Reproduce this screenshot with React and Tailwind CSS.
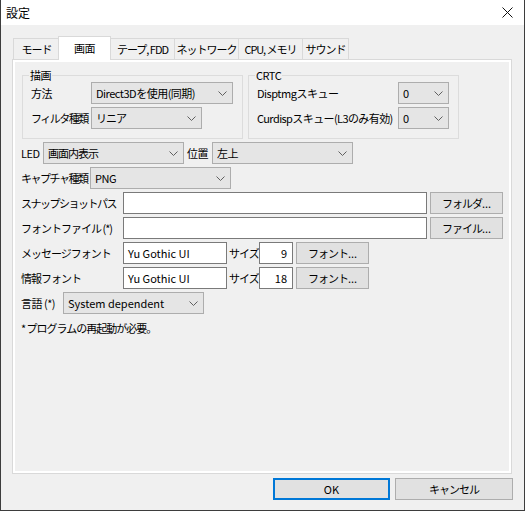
import React from "react";

const K = "tracking-[-1px]";
const KK = "tracking-[-1.5px]";

function Chevron() {
  return (
    <svg width="9" height="5" viewBox="0 0 9 5" className="shrink-0">
      <path d="M0.5 0.5 L4.5 4.5 L8.5 0.5" fill="none" stroke="#606060" strokeWidth="1" />
    </svg>
  );
}

function Select({ w, value, cls = "" }) {
  return (
    <div className={`${w} h-[22px] shrink-0 flex items-center justify-between border border-[#adadad] bg-[#e5e5e5] pl-[4px] pr-[5px]`}>
      <span className={`whitespace-nowrap ${cls}`}>{value}</span>
      <Chevron />
    </div>
  );
}

function Input({ w, value = "", right = false }) {
  return (
    <div className={`${w} h-[22px] shrink-0 flex items-center border border-[#7a7a7a] bg-white ${right ? "justify-end pr-[5px]" : "pl-[4px]"}`}>
      <span className="whitespace-nowrap tracking-normal">{value}</span>
    </div>
  );
}

function Btn({ w, children, dots = false, cls = "" }) {
  return (
    <div className={`${w} h-[22px] shrink-0 flex items-center justify-center border border-[#adadad] bg-[#e1e1e1] ${cls}`}>
      <span className="tracking-[-1px]">{children}</span>
      {dots && <span className="tracking-normal">...</span>}
    </div>
  );
}

function Tab({ w, children, cls = "" }) {
  return (
    <div className={`${w} h-[21px] shrink-0 flex items-center justify-center border-l border-t border-r border-[#d9d9d9] bg-[#f0f0f0] whitespace-nowrap tracking-[-1px] ${cls}`}>
      {children}
    </div>
  );
}

function Label({ w, children, cls = "" }) {
  return <span className={`${w} shrink-0 whitespace-nowrap ${cls}`}>{children}</span>;
}

const rootCls = "w-[525px] h-[511px] bg-[#f0f0f0] border-x border-b border-[#3d3d3d] flex flex-col text-[11px] leading-[14px] tracking-[-0.5px] text-black font-['Noto_Sans_CJK_JP','Noto_Sans',sans-serif]";

export default function App() {
  return (
    <div className={rootCls}>
      {/* Title bar */}
      <div className="h-[25px] shrink-0 bg-white flex items-center justify-between pl-[5px] pr-[11px]">
        <span className="text-[12px] tracking-normal">設定</span>
        <svg width="11" height="11" viewBox="0 0 11 11">
          <path d="M0.5 0.5 L10.5 10.5 M10.5 0.5 L0.5 10.5" stroke="#111" strokeWidth="1" fill="none" />
        </svg>
      </div>

      <div className="flex flex-col pl-[11px] pr-[12px] pt-[11px]">
        {/* Tabs */}
        <div className="flex items-end h-[23px] pl-[1px]">
          <Tab w="w-[47px]">モード</Tab>
          <div className="relative z-10 w-[53px] h-[24px] -mb-[1px] -ml-[2px] shrink-0 flex items-start pt-[4px] justify-center border-l border-t border-r border-[#d9d9d9] bg-white">
            画面
          </div>
          <Tab w="w-[65px]" cls="-ml-[1px]">テープ, FDD</Tab>
          <Tab w="w-[65px]" cls="-ml-[1px]">ネットワーク</Tab>
          <Tab w="w-[65px]" cls="-ml-[1px]">CPU, メモリ</Tab>
          <Tab w="w-[47px]" cls="-ml-[1px]">サウンド</Tab>
        </div>

        {/* Panel */}
        <div className="h-[415px] border border-[#d9d9d9] bg-white p-[2px]">
          <div className="h-full bg-[#f0f0f0] pt-[6px] pl-[6px] flex flex-col">
            <div className="flex gap-[5px] ml-[1px]">
              <fieldset className="w-[221px] border border-[#dcdcdc] pl-[8px] pb-[9px]">
                <legend className="px-[1px] -ml-[2px] leading-[14px]">描画</legend>
                <div className="flex flex-col gap-[3px]">
                  <div className="flex items-center">
                    <Label w="w-[60px]">方法</Label>
                    <Select w="w-[142px]" value="Direct3Dを使用(同期)" />
                  </div>
                  <div className="flex items-center">
                    <Label w="w-[60px]" cls={KK}>フィルタ種類</Label>
                    <Select w="w-[111px]" value="リニア" cls={K} />
                  </div>
                </div>
              </fieldset>
              <fieldset className="w-[211px] border border-[#dcdcdc] pl-[8px] pb-[9px]">
                <legend className="px-[1px] -ml-[2px] leading-[14px]">CRTC</legend>
                <div className="flex flex-col gap-[3px]">
                  <div className="flex items-center">
                    <Label w="w-[141px]">Disptmgスキュー</Label>
                    <Select w="w-[51px]" value="0" />
                  </div>
                  <div className="flex items-center">
                    <Label w="w-[141px]" cls="tracking-[-0.6px]">Curdispスキュー(L3のみ有効)</Label>
                    <Select w="w-[51px]" value="0" />
                  </div>
                </div>
              </fieldset>
            </div>

            <div className="flex flex-col gap-[3px] mt-[3px]">
              <div className="flex items-center">
                <Label w="w-[22px]">LED</Label>
                <Select w="w-[141px]" value="画面内表示" cls={K} />
                <Label w="w-[25px]" cls="ml-[3px]">位置</Label>
                <Select w="w-[141px]" value="左上" />
              </div>
              <div className="flex items-center">
                <Label w="w-[69px]" cls={KK}>キャプチャ種類</Label>
                <Select w="w-[141px]" value="PNG" />
              </div>
              <div className="flex items-center">
                <Label w="w-[102px]" cls={KK}>スナップショットパス</Label>
                <Input w="w-[304px]" />
                <Btn w="w-[73px]" cls="ml-[3px]" dots>フォルダ</Btn>
              </div>
              <div className="flex items-center">
                <Label w="w-[102px]" cls={K}>フォントファイル (*)</Label>
                <Input w="w-[304px]" />
                <Btn w="w-[73px]" cls="ml-[3px]" dots>ファイル</Btn>
              </div>
              <div className="flex items-center">
                <Label w="w-[102px]" cls={K}>メッセージフォント</Label>
                <Input w="w-[104px]" value="Yu Gothic UI" />
                <Label w="w-[30px]" cls={`ml-[2px] ${K}`}>サイズ</Label>
                <Input w="w-[34px]" value="9" right />
                <Btn w="w-[73px]" cls="ml-[3px]" dots>フォント</Btn>
              </div>
              <div className="flex items-center">
                <Label w="w-[102px]" cls={K}>情報フォント</Label>
                <Input w="w-[104px]" value="Yu Gothic UI" />
                <Label w="w-[30px]" cls={`ml-[2px] ${K}`}>サイズ</Label>
                <Input w="w-[34px]" value="18" right />
                <Btn w="w-[73px]" cls="ml-[3px]" dots>フォント</Btn>
              </div>
              <div className="flex items-center">
                <Label w="w-[42px]">言語 (*)</Label>
                <Select w="w-[141px]" value="System dependent" cls="tracking-normal" />
              </div>
            </div>
            <div className={`mt-[7px] ${K}`}>* プログラムの再起動が必要。</div>
          </div>
        </div>

        {/* Bottom buttons */}
        <div className="flex justify-end gap-[5px] mt-[4px] -mr-[1px]">
          <div className="w-[117px] h-[22px] flex items-center justify-center border-2 border-[#0078d7] bg-[#e1e1e1] tracking-normal">OK</div>
          <Btn w="w-[118px]">キャンセル</Btn>
        </div>
      </div>
    </div>
  );
}
